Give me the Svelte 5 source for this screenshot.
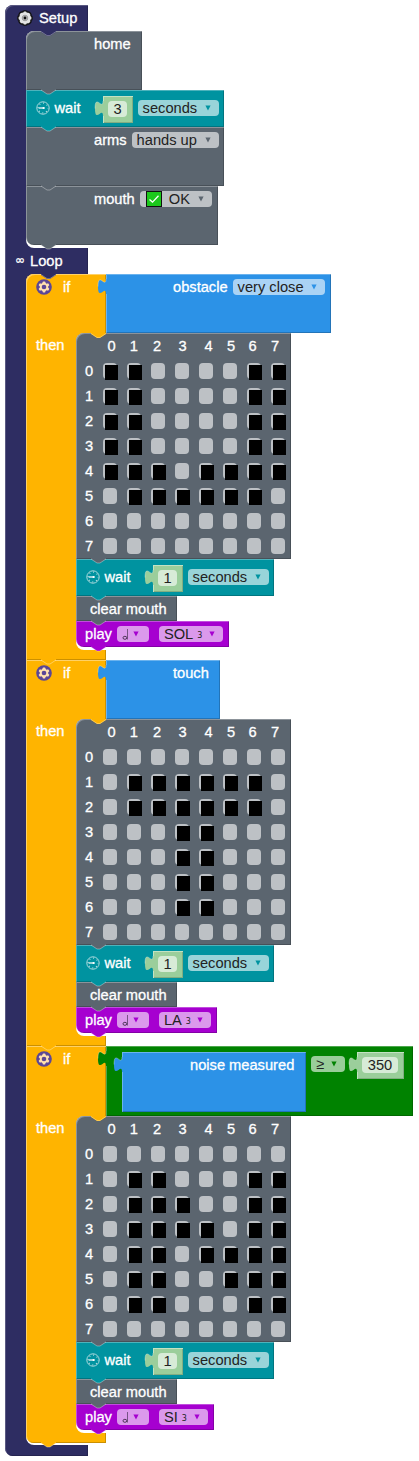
<script>
  const base = { wait: '#0093a0', gray: '#5b656f', play: '#a600d0' };
  const grids = [
    ['11000011', '11000011', '11000011', '11000011', '11101111', '01111110', '00000000', '00000000'],
    ['00000000', '01111110', '01111110', '00011000', '00011000', '00011000', '00011000', '00000000'],
    ['00000000', '01100011', '01110011', '01111011', '01101111', '01100111', '01100011', '00000000']
  ];
  const rules = [
    { grid: grids[0], note: 'SOL', noteWidth: 64 },
    { grid: grids[1], note: 'LA', noteWidth: 52 },
    { grid: grids[2], note: 'SI', noteWidth: 49 }
  ];
  const columns = [0, 1, 2, 3, 4, 5, 6, 7];
</script>

{#snippet tab(color)}
  <svg class="tab" width="17" height="6" viewBox="0 0 17 6">
    <path d="M1 0V1L7 5h3l6-4V0z" fill={color} />
    <path d="M1 1L7 5h3l6-4" fill="none" stroke="#fff" stroke-opacity=".35" />
  </svg>
{/snippet}

{#snippet notch(color)}
  <svg class="notch" width="17" height="6" viewBox="0 0 17 6">
    <path d="M1 0V1L7 5h3l6-4V0z" fill={color} />
    <path d="M1 .5L7 4.5h3l6-4" fill="none" stroke="#fff" stroke-opacity=".3" />
  </svg>
{/snippet}

{#snippet plug(color)}
  <svg class="plug" width="10" height="16" viewBox="0 0 10 16">
    <path d="M9 0c0 10-8-8-8 7.5s8-2.5 8 7.5h1V0z" fill={color} />
    <path d="M9 0c0 10-8-8-8 7.5" fill="none" stroke="#fff" stroke-opacity=".3" />
  </svg>
{/snippet}

{#snippet arrow(color)}
  <svg class="arrow" width="6" height="6" viewBox="0 0 6 6"><path d="M.4.4h5.2L3 5.6z" fill={color} /></svg>
{/snippet}

{#snippet wait(value)}
  <div class="block wait">
    <svg class="clock" width="14" height="14" viewBox="0 0 14 14">
      <circle cx="7" cy="7" r="6.2" fill="none" stroke="#a9d8dc" stroke-width="1" />
      <circle cx="7" cy="7" r="4.9" fill="none" stroke="#b9e0e3" stroke-width="1.2" stroke-dasharray=".9 2.95" stroke-dashoffset=".45" />
      <path d="M2.6 7H8.4" stroke="#fff" stroke-width="1.2" />
      <circle cx="7.6" cy="7" r="1.1" fill="#fff" />
    </svg>
    <span class="label">wait</span>
    <div class="number">{@render plug('#9bce9b')}<span class="field">{value}</span></div>
    <span class="field seconds">seconds{@render arrow(base.wait)}</span>
    {@render tab(base.wait)}
  </div>
{/snippet}

{#snippet gear()}
  <svg class="gear" width="16" height="16" viewBox="0 0 16 16">
    <circle cx="8" cy="8" r="7.8" fill="#5b4696" />
    <g fill="#ffe0b0">
      <circle cx="8" cy="8" r="4.3" />
      {#each [0, 60, 120] as turn}
        <rect x="6.6" y="2.4" width="2.8" height="11.2" rx=".8" transform="rotate({turn} 8 8)" />
      {/each}
    </g>
    <circle cx="8" cy="8" r="2.3" fill="#5b4696" />
  </svg>
  <span class="label if">if</span>
{/snippet}

{#snippet body(rule)}
  <div class="then">
    <span class="label">then</span>
    <div class="stack">
      <div class="block matrix">
        {@render notch('#ffb400')}
        <div class="columns">{#each columns as c}<span>{c}</span>{/each}</div>
        {#each rule.grid as row, r}
          <div class="row">
            <span class="index">{r}</span>
            {#each row as cell}<i class:on={cell === '1'}></i>{/each}
          </div>
        {/each}
        {@render tab(base.gray)}
      </div>
      {@render wait(1)}
      <div class="block clear"><span class="label">clear mouth</span>{@render tab(base.gray)}</div>
      <div class="block play">
        <span class="label">play</span>
        <span class="field note">
          <svg width="7" height="13" viewBox="0 0 7 13"><path d="M5.5 1V11.5" stroke="#765284" /><ellipse cx="2.9" cy="9.8" rx="1.9" ry="1.5" fill="none" stroke="#4d3457" /></svg>
          {@render arrow(base.play)}
        </span>
        <span class="field pitch" style="width:{rule.noteWidth}px">{rule.note}<small>3</small>{@render arrow(base.play)}</span>
        {@render tab(base.play)}
      </div>
    </div>
  </div>
  <div class="foot"></div>
  {@render tab('#ffb400')}
{/snippet}

<main>
  <section class="top">
    <header>
      <svg width="16" height="16" viewBox="0 0 16 16">
        <g fill="#e4e4e4" stroke="#111" stroke-width="1.4">
          {#each [0, 45, 90, 135] as turn}
            <rect x="5.7" y=".9" width="4.6" height="14.2" rx="1.6" transform="rotate({turn} 8 8)" />
          {/each}
        </g>
        <circle cx="8" cy="8" r="5.9" fill="#e4e4e4" />
        <circle cx="8" cy="8" r="2.8" fill="#bbb" stroke="#888" stroke-width=".7" />
        <circle cx="8" cy="8" r="1.4" fill="#111" />
      </svg>
      <span class="label">Setup</span>
    </header>
    <div class="stack">
      <div class="block home">{@render notch('#2e2d62')}<span class="label">home</span>{@render tab(base.gray)}</div>
      {@render wait(3)}
      <div class="block arms">
        <span class="label">arms</span>
        <span class="field">hands up{@render arrow(base.gray)}</span>
        {@render tab(base.gray)}
      </div>
      <div class="block mouth">
        <span class="label">mouth</span>
        <span class="field">
          <svg class="check" width="16" height="16" viewBox="0 0 16 16">
            <rect x=".5" y=".5" width="15" height="15" fill="#1cc81c" stroke="#111" />
            <path d="M3.5 8.4l3 2.7 6-6.3" fill="none" stroke="#fff" stroke-width="1.3" />
          </svg>OK{@render arrow(base.gray)}
        </span>
        {@render tab(base.gray)}
      </div>
    </div>
    <header class="loop"><span class="infinity">∞</span><span class="label">Loop</span></header>
    <div class="stack rules">
      <div class="rule">
        {@render notch('#2e2d62')}
        <div class="head">
          {@render gear()}
          <div class="value obstacle">
            {@render plug('#2c92e7')}
            <span class="label">obstacle</span>
            <span class="field">very close{@render arrow('#2c92e7')}</span>
          </div>
        </div>
        {@render body(rules[0])}
      </div>
      <div class="rule">
        <div class="head">
          {@render gear()}
          <div class="value touch">{@render plug('#2c92e7')}<span class="label">touch</span></div>
        </div>
        {@render body(rules[1])}
      </div>
      <div class="rule">
        <div class="head tall">
          {@render gear()}
          <div class="value compare">
            {@render plug('#008200')}
            <div class="value noise">{@render plug('#2c92e7')}<span class="label">noise measured</span></div>
            <span class="field operator">≥{@render arrow('#008200')}</span>
            <div class="number">{@render plug('#9bce9b')}<span class="field">350</span></div>
          </div>
        </div>
        {@render body(rules[2])}
      </div>
    </div>
    <div class="end"></div>
  </section>
</main>

<style>
  :global(body) { background: #fff; }
  main {
    box-sizing: border-box;
    width: 419px;
    height: 1461px;
    padding: 5px;
    overflow: hidden;
    font: 14.67px/16px "Liberation Sans", Arial, sans-serif;
  }
  div, span, header, section { box-sizing: border-box; }
  svg { display: block; flex: none; }
  .label { color: #fff; flex: none; white-space: nowrap; -webkit-text-stroke: .3px #fff; }
  .top { width: 83px; background: #2e2d62; border-radius: 8px 0 0 8px; box-shadow: inset 1px 1px #5a5982, inset -1px -1px #252450; }
  header { display: flex; height: 26px; padding: 5px 0 0 12px; gap: 6px; }
  header.loop { gap: 4px; padding-left: 10px; }
  .infinity { color: #fff; font: 12px/14px "DejaVu Sans", sans-serif; width: 11px; -webkit-text-stroke: .3px #fff; }
  .stack { width: max-content; margin-left: 21px; padding-bottom: 3px; background: #fff; border-radius: 8px 0 0 8px; }
  .rules { padding-bottom: 2px; }
  .end { height: 11px; }
  .block { position: relative; display: flex; align-items: flex-start; color: #222; }
  .block, .value { box-shadow: inset 1px 1px rgba(255,255,255,.3), inset -1px -1px rgba(0,0,0,.2); }
  .block:first-child { border-top-left-radius: 8px; }
  .block:last-child { border-bottom-left-radius: 8px; }
  .tab { position: absolute; left: 14px; bottom: -5px; z-index: 2; }
  .notch { position: absolute; left: 14px; top: 0; z-index: 2; }
  .plug { position: absolute; left: -9px; top: 5px; z-index: 1; }
  .field { display: flex; align-items: center; height: 16px; border-radius: 4px; background: rgba(255,255,255,.6); color: #222; white-space: nowrap; padding: 0 5px; flex: none; }
  .arrow { margin-left: auto; }
  .home, .arms, .mouth { height: 59px; padding: 5px 0 0 68px; background: #5b656f; }
  .home { width: 116px; }
  .arms { width: 198px; }
  .mouth { width: 192px; }
  .arms .field { width: 87px; margin-left: 5px; padding-right: 8px; }
  .mouth .field { width: 72px; margin-left: 5px; padding-right: 8px; padding-left: 6px; }
  .check { margin-right: 7px; }
  .wait { width: 198px; height: 37px; padding: 10px 0 0 10px; background: #0093a0; }
  .clock { margin: 1px 4.5px 0 0; }
  .wait .number { margin: -4.5px 0 0 22.5px; }
  .number { position: relative; width: 30px; height: 27px; padding: 5px 6px 5px 5px; background: #9bce9b; box-shadow: inset 1px 1px #c3e2c3, inset -1px -1px #82ad82; flex: none; }
  .number .field { justify-content: center; padding: 0; }
  .seconds { width: 81px; margin-left: 4.5px; padding-right: 8px; }
  .rule { position: relative; width: 80px; background: #ffb400; box-shadow: inset 1px 1px #ffd166, inset -1px -1px #cc9000; }
  .rule:first-child { border-top-left-radius: 8px; }
  .rule:last-child { border-bottom-left-radius: 8px; }
  .head { display: flex; height: 59px; padding-left: 10px; }
  .head.tall { height: 70px; }
  .gear { margin-top: 5px; }
  .if { margin: 5px 0 0 11px; width: 43px; }
  .value { position: relative; display: flex; align-items: flex-start; height: 59px; padding-top: 5px; background: #2c92e7; flex: none; }
  .obstacle { width: 225px; padding-left: 67px; }
  .obstacle .field { width: 92px; margin-left: 5px; padding-right: 8px; }
  .touch { width: 114px; padding-left: 67px; }
  .compare { width: 307px; height: 70px; padding: 5.5px 0 0 16px; background: #008200; }
  .noise { width: 184px; height: 60px; padding-left: 68px; }
  .operator { width: 34px; margin: 4.5px 12px 0 5px; padding-right: 8px; }
  .compare .number { width: 47px; }
  .then { display: flex; width: max-content; }
  .then > .label { width: 50px; padding: 4px 0 0 10px; }
  .then .stack { margin: 0; }
  .foot { height: 10px; }
  .matrix { flex-direction: column; width: 215px; height: 226px; padding-left: 9px; background: #5b656f; }
  .columns { display: grid; grid-template-columns: 22px 22.5px 24px 27px 25px 20px 23px 22px; margin-left: 15.5px; height: 25px; padding-top: 5px; color: #fff; text-align: center; -webkit-text-stroke: .3px #fff; }
  .row { display: flex; height: 25px; padding-top: 5px; gap: 10px; color: #fff; }
  .index { width: 8px; -webkit-text-stroke: .3px #fff; }
  .row i { width: 14px; height: 16px; border-radius: 4px; background: #bdc1c5; }
  .row i.on::after { content: ""; display: block; width: 13px; height: 15px; margin: 2px 0 0 2px; background: #000; }
  .clear { width: 101px; height: 25px; padding: 5px 0 0 14px; background: #5b656f; }
  .play { width: max-content; height: 26px; padding: 5px 6px 0 9px; background: #a600d0; }
  .note { width: 32px; margin: 0 10px 0 5px; padding-right: 10px; }
  .pitch { padding-right: 8px; }
  .pitch small { margin: 3px 0 0 4px; font: 8px/10px "DejaVu Sans", sans-serif; }
</style>
